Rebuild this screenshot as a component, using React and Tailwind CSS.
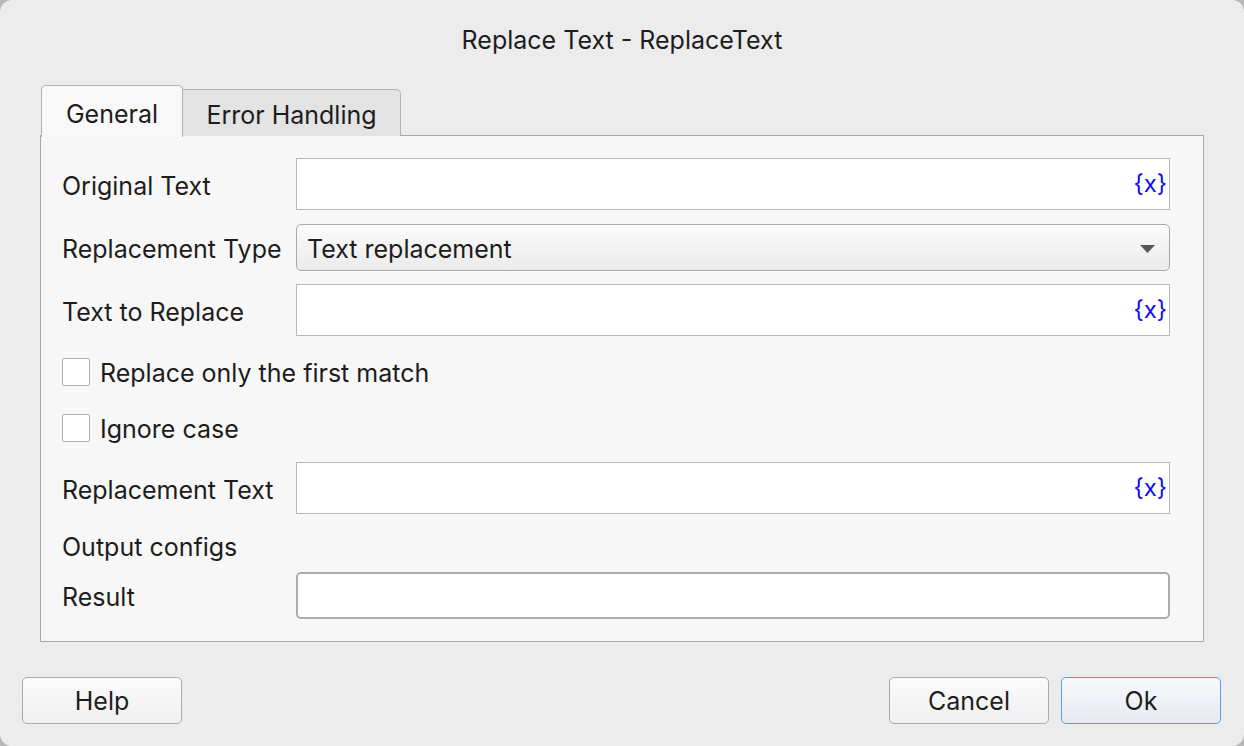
import React from "react";

const font = { fontFamily: "Inter, 'Liberation Sans', sans-serif" };

function VarInput() {
  return (
    <div className="flex-1 h-[52px] bg-white border border-[#b9b9b9] flex items-center justify-end pr-[2px]">
      <span className="text-[#0f0ff7] text-[24px] leading-none">{"{x}"}</span>
    </div>
  );
}

function Row({ label, children, className = "" }) {
  return (
    <div className={`flex items-center ${className}`}>
      <div className="w-[234px] shrink-0 text-[25px] leading-[28px] pt-[3px] text-[#1d1d1d]">{label}</div>
      {children}
    </div>
  );
}

function Check({ label, className = "" }) {
  return (
    <div className={`flex items-center gap-[10px] h-[28px] ${className}`}>
      <div className="w-[28px] h-[28px] bg-white border border-[#b0b0b0] rounded-[2px]" />
      <span className="text-[25px] leading-[28px] pt-[2px] text-[#1d1d1d]">{label}</span>
    </div>
  );
}

function Button({ children, primary }) {
  return (
    <button
      className={`w-[160px] h-[47px] rounded-[5px] text-[25px] leading-[28px] text-[#1d1d1d] border ${
        primary
          ? "border-[#5c9ee6] bg-gradient-to-b from-[#f7f9fc] to-[#e6eaf0]"
          : "border-[#aaaaaa] bg-gradient-to-b from-[#fbfbfb] to-[#f0f0f0]"
      }`}
    >
      {children}
    </button>
  );
}

export default function App() {
  return (
    <div className="w-[1244px] h-[746px] bg-[#b8b8b8]" style={font}>
      <div className="w-full h-full bg-[#ececec] rounded-[12px] flex flex-col">
        <div className="pt-[26px] text-center text-[25px] leading-[28px] text-[#1d1d1d]">
          Replace Text - ReplaceText
        </div>

        <div className="flex items-end ml-[41px] mt-[31px] relative z-10 h-[52px]">
          <div className="w-[142px] h-[52px] bg-[#f8f8f8] border border-b-0 border-[#b3b3b3] rounded-t-[5px] flex items-center justify-center text-[25px] leading-[28px] text-[#1d1d1d] pt-[4px]">
            General
          </div>
          <div className="w-[218px] h-[47px] mb-[1px] bg-[#e3e3e3] border border-l-0 border-b-0 border-[#b3b3b3] rounded-tr-[5px] flex items-center justify-center text-[25px] leading-[28px] text-[#1d1d1d] pt-[4px]">
            Error Handling
          </div>
        </div>

        <div className="mx-[40px] -mt-[2px] h-[507px] bg-[#f7f7f7] border border-[#a8a8a8] pl-[21px] pr-[33px] pt-[22px] flex flex-col">
          <Row label="Original Text">
            <VarInput />
          </Row>
          <Row label="Replacement Type" className="mt-[14px]">
            <div className="flex-1 h-[47px] rounded-[5px] border border-[#a9a9a9] bg-gradient-to-b from-[#fbfbfb] to-[#ebebeb] flex items-center justify-between pl-[10px] pr-[14px] pt-[2px] text-[25px] leading-[28px] text-[#1d1d1d]">
              <span>Text replacement</span>
              <svg width="15" height="8" viewBox="0 0 15 8">
                <path d="M0 0 L15 0 L7.5 8 Z" fill="#585858" />
              </svg>
            </div>
          </Row>
          <Row label="Text to Replace" className="mt-[13px]">
            <VarInput />
          </Row>
          <Check label="Replace only the first match" className="mt-[22px]" />
          <Check label="Ignore case" className="mt-[28px]" />
          <Row label="Replacement Text" className="mt-[20px]">
            <VarInput />
          </Row>
          <div className="mt-[17px] pt-[2px] text-[25px] leading-[28px] text-[#1d1d1d]">Output configs</div>
          <Row label="Result" className="mt-[11px]">
            <div className="flex-1 h-[47px] bg-white border-2 border-[#acacac] rounded-[5px]" />
          </Row>
        </div>

        <div className="flex items-center justify-between pl-[22px] pr-[23px] mt-[35px]">
          <Button>Help</Button>
          <div className="flex gap-[12px]">
            <Button>Cancel</Button>
            <Button primary>Ok</Button>
          </div>
        </div>
      </div>
    </div>
  );
}
